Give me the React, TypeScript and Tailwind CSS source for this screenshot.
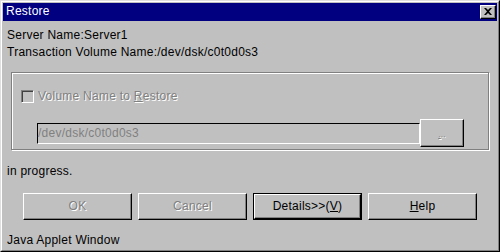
const raised =
  "border border-t-white border-l-white border-r-black border-b-black shadow-[inset_-1px_-1px_0_#808080]";

const Btn = ({
  children,
  disabled,
  isDefault,
}: {
  children: React.ReactNode;
  disabled?: boolean;
  isDefault?: boolean;
}) => {
  const inner = (
    <div
      className={`flex items-center justify-center h-full w-full ${raised} ${
        disabled ? "text-[#808080] [text-shadow:1px_1px_0_#fff]" : "text-black"
      }`}
    >
      {children}
    </div>
  );
  if (isDefault) {
    return <div className="w-[109px] h-[27px] border border-black">{inner}</div>;
  }
  return <div className="w-[109px] h-[27px]">{inner}</div>;
};

export default function App() {
  return (
    <div
      className="w-[500px] h-[252px] bg-[#c0c0c0] border border-t-[#dfdfdf] border-l-[#dfdfdf] border-r-black border-b-black text-[12px] tracking-[0.25px] leading-[17px] text-black"
      style={{ fontFamily: '"Liberation Sans", Arial, sans-serif' }}
    >
      <div className="h-full border border-t-white border-l-white border-r-[#808080] border-b-[#808080] p-px flex flex-col">
        {/* title bar */}
        <div className="h-[18px] bg-[#000080] flex items-center justify-between pl-[3px] pr-[1px]">
          <span className="text-white">Restore</span>
          <div
            className={`w-[16px] h-[14px] bg-[#c0c0c0] ${raised} flex items-center justify-center`}
          >
            <svg width="8" height="7" viewBox="0 0 8 7">
              <path d="M0 0h2l2 2 2-2h2L5 3.5 8 7H6L4 5 2 7H0l3-3.5z" fill="#000" />
            </svg>
          </div>
        </div>

        <div className="pl-[4px] mt-[6px]">
          <div>Server Name:Server1</div>
          <div>Transaction Volume Name:/dev/dsk/c0t0d0s3</div>
        </div>

        {/* group box */}
        <div className="ml-[8px] mt-[11px] w-[478px] h-[79px] border border-[#808080] shadow-[inset_1px_1px_0_#fff,1px_1px_0_#fff] flex flex-col">
          <div className="flex items-center mt-[15px] ml-[9px]">
            <div className="w-[13px] h-[13px] border border-t-[#808080] border-l-[#808080] border-r-white border-b-white shadow-[inset_1px_1px_0_#404040]" />
            <span className="ml-[4px] text-[#808080] [text-shadow:1px_1px_0_#fff]">
              Volume Name to <span className="underline">R</span>estore
            </span>
          </div>
          <div className="flex items-start mt-[14px] ml-[25px]">
            <div className="w-[383px] h-[21px] mt-[4px] border border-t-black border-l-black border-r-white border-b-white flex items-center text-[#808080]">
              /dev/dsk/c0t0d0s3
            </div>
            <div className={`w-[44px] h-[28px] ${raised} flex items-center justify-center`}>
              <span className="text-[8px] leading-none text-[#808080] [text-shadow:1px_1px_0_#fff] mt-[4px]">
                <span className="underline">.</span>..
              </span>
            </div>
          </div>
        </div>

        <div className="pl-[4px] mt-[13px]">in progress.</div>

        <div className="flex gap-[6px] ml-[20px] mt-[13px]">
          <Btn disabled>OK</Btn>
          <Btn disabled>Cancel</Btn>
          <Btn isDefault>
            Details&gt;&gt;(<span className="underline">V</span>)
          </Btn>
          <Btn>
            <span className="underline">H</span>elp
          </Btn>
        </div>

        <div className="pl-[4px] mt-[12px]">Java Applet Window</div>
      </div>
    </div>
  );
}
